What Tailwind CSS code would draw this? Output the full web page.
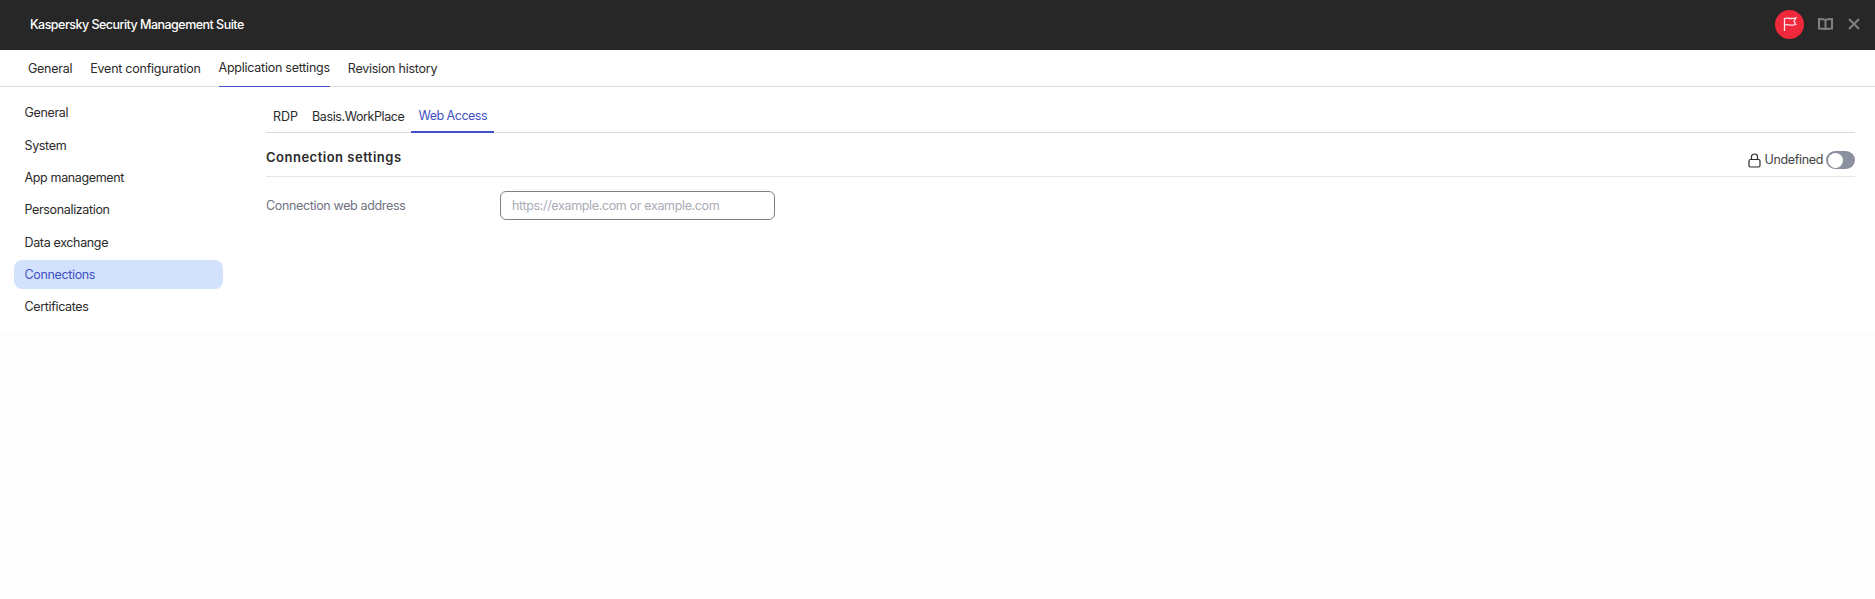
<!DOCTYPE html>
<html>
<head>
<meta charset="utf-8">
<title>Kaspersky Security Management Suite</title>
<script src="https://cdn.jsdelivr.net/npm/@tailwindcss/browser@4"></script>
</head>
<body class="bg-[#fdfdfd] font-['Inter','Noto_Sans',sans-serif] text-[12.5px] tracking-[-0.35px] text-[#2a2a2a] h-[599px] overflow-hidden">
  <!-- top bar -->
  <div class="h-[50px] bg-[#272727] flex items-center pl-[30px] pr-[15px] pb-[2px]">
    <div class="text-white text-[12.5px] font-medium tracking-[-0.52px] pt-[2px]">Kaspersky Security Management Suite</div>
    <div class="ml-auto flex items-center">
      <div class="w-[29px] h-[29px] rounded-full bg-[#f0283c] flex items-center justify-center">
        <svg width="16" height="16" viewBox="0 0 16 16" fill="none" stroke="#ffe4ea" stroke-width="1.300"><path d="M2.500 15V2.500C5.500 1 8 3.800 13.800 1.800L12 5.200 13.800 8.500C8 10.300 5.500 7.500 2.500 9"/></svg>
      </div>
      <svg class="ml-[14px]" width="15" height="12" viewBox="0 0 15 12" fill="none" stroke="#808080" stroke-width="2"><path d="M7.500 2C6 1 3.500 1 1 1V10.500C3.500 10.500 6 10.500 7.500 11 9 10.500 11.500 10.500 14 10.500V1C11.500 1 9 1 7.500 2ZM7.500 2V11"/></svg>
      <svg class="ml-[15px]" width="12" height="12" viewBox="0 0 12 12" fill="none" stroke="#808080" stroke-width="2"><path d="M1 1L11 11M11 1L1 11"/></svg>
    </div>
  </div>
  <!-- page tabs -->
  <div class="h-[37px] bg-white border-b border-[#dcdce0] flex pl-[28px] gap-[18px] tracking-[-0.25px]">
    <div class="h-[37px] pt-[1px] flex items-center">General</div>
    <div class="h-[37px] pt-[1px] flex items-center">Event configuration</div>
    <div class="h-[37px] pt-[1px] flex items-center border-b border-[#3f51c4]">Application settings</div>
    <div class="h-[37px] pt-[1px] flex items-center">Revision history</div>
  </div>
  <div class="flex bg-white h-[245px]">
    <!-- side menu -->
    <div class="w-[266px] shrink-0 pl-[14px] pt-[11px]">
      <div class="w-[209px] flex flex-col gap-[3.4px]">
        <div class="h-[29px] pt-[2px] flex items-center pl-[10.500px] rounded-[8px]">General</div>
        <div class="h-[29px] pt-[2px] flex items-center pl-[10.500px] rounded-[8px]">System</div>
        <div class="h-[29px] pt-[2px] flex items-center pl-[10.500px] rounded-[8px]">App management</div>
        <div class="h-[29px] pt-[2px] flex items-center pl-[10.500px] rounded-[8px]">Personalization</div>
        <div class="h-[29px] pt-[2px] flex items-center pl-[10.500px] rounded-[8px]">Data exchange</div>
        <div class="h-[29px] pt-[2px] flex items-center pl-[10.500px] rounded-[8px] bg-[#d3e2fc] text-[#3f51c4]">Connections</div>
        <div class="h-[29px] pt-[2px] flex items-center pl-[10.500px] rounded-[8px]">Certificates</div>
      </div>
    </div>
    <!-- content -->
    <div class="flex-1 pr-[20px]">
      <div class="h-[46px] border-b border-[#dcdce0] flex pt-[10px]">
        <div class="px-[7px] h-[36px] pt-[4px] flex items-center tracking-[0px]">RDP</div>
        <div class="px-[7px] h-[36px] pt-[4px] flex items-center tracking-[-0.4px]">Basis.WorkPlace</div>
        <div class="px-[7px] h-[36px] pt-[4px] flex items-center tracking-[-0.5px] text-[#3f51c4] border-b-2 border-[#3f51c4]">Web Access</div>
      </div>
      <div class="h-[44px] pt-[6px] border-b border-[#e6e6ea] flex items-center justify-between">
        <div class="text-[13px] font-semibold tracking-[0.5px]">Connection settings</div>
        <div class="flex items-center mt-[5px]">
          <svg width="13" height="15" viewBox="0 0 13 15" fill="none" stroke="#2a2a2a" stroke-width="1.200"><rect x="1" y="6.500" width="11" height="7.500" rx="1.500"/><path d="M3.500 6.500V3.800C3.500 2.200 4.800 1 6.500 1S9.500 2.200 9.500 3.800V6.500"/></svg>
          <span class="ml-[4px] text-[#444]">Undefined</span>
          <div class="ml-[3px] w-[29px] h-[18px] rounded-full bg-[#8b909e] p-[1.500px]">
            <div class="w-[15px] h-[15px] rounded-full bg-white"></div>
          </div>
        </div>
      </div>
      <div class="flex items-center mt-[14px]">
        <div class="w-[234px] pt-[2px] text-[#6f7280]">Connection web address</div>
        <input class="w-[275px] h-[29px] rounded-[6px] border border-[#7f818a] px-[11px] placeholder:text-[#a9abb5]" placeholder="https://example.com or example.com">
      </div>
    </div>
  </div>
</body>
</html>
